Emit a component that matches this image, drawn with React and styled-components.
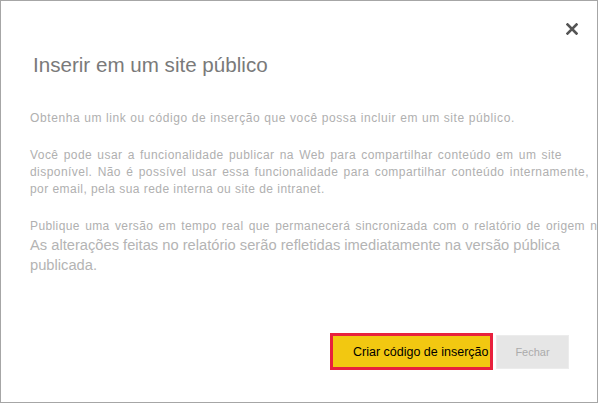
import React from "react";
import styled, { createGlobalStyle } from "styled-components";

const Global = createGlobalStyle`
  html, body { margin: 0; padding: 0; background: #fff; }
  body { font-family: "Liberation Sans", Arial, sans-serif; }
`;

const Dialog = styled.div`
  box-sizing: border-box;
  width: 598px;
  height: 403px;
  border: 1px solid #a6a6a6;
  background: #fff;
  overflow: hidden;
  display: flex;
  flex-direction: column;
`;

const Header = styled.div`
  display: flex;
  justify-content: flex-end;
  padding: 21px 18px 0 0;
  height: 14px;
`;

const CloseButton = styled.button`
  border: 0;
  background: none;
  padding: 0;
  width: 14px;
  height: 14px;
  display: flex;
  align-items: center;
  justify-content: center;
  cursor: pointer;
`;

const Title = styled.h1`
  margin: 17px 0 0 32px;
  font-size: 20.6px;
  font-weight: normal;
  color: #7a7a7a;
  line-height: 24px;
  white-space: nowrap;
`;

const Body = styled.div`
  padding: 0 0 0 29px;
  display: flex;
  flex-direction: column;
`;

const Para = styled.p`
  margin: ${(p) => p.$top}px 0 0 0;
  font-size: 12px;
  letter-spacing: ${(p) => p.$ls}px;
  word-spacing: ${(p) => p.$ws || 0}px;
  color: #b0b0b0;
  line-height: 17px;
  white-space: nowrap;
`;

const Line = styled.span`
  display: block;
  width: ${(p) => (p.$w ? p.$w + "px" : "auto")};
  text-align: ${(p) => (p.$w ? "justify" : "left")};
  text-align-last: ${(p) => (p.$w ? "justify" : "auto")};
  white-space: ${(p) => (p.$w ? "normal" : "nowrap")};
`;

const BigLine = styled.span`
  display: block;
  font-size: 14.7px;
  letter-spacing: 0;
  word-spacing: 0;
  line-height: 20px;
  color: #b4b4b4;
`;

const Footer = styled.div`
  margin-top: auto;
  display: flex;
  justify-content: flex-end;
  align-items: center;
  gap: 3px;
  padding: 0 28px 32px 0;
`;

const PrimaryButton = styled.button`
  box-sizing: border-box;
  width: 163px;
  height: 37px;
  border: 3px solid #e8213d;
  background: #f2c811;
  color: #000;
  font-family: "Liberation Sans", Arial, sans-serif;
  font-size: 12.5px;
  padding: 0 0 0 20px;
  text-align: left;
  white-space: nowrap;
  cursor: pointer;
`;

const SecondaryButton = styled.button`
  box-sizing: border-box;
  width: 73px;
  height: 34px;
  border: 1px solid #ececec;
  background: #e6e6e6;
  color: #ababab;
  font-family: "Liberation Sans", Arial, sans-serif;
  font-size: 11px;
  cursor: pointer;
`;

export default function App() {
  return (
    <>
      <Global />
      <Dialog>
        <Header>
          <CloseButton aria-label="Fechar">
            <svg width="12" height="12" viewBox="0 0 12 12">
              <path d="M1.5 1.5 L10.5 10.5 M10.5 1.5 L1.5 10.5" stroke="#555" strokeWidth="2.6" strokeLinecap="square" />
            </svg>
          </CloseButton>
        </Header>
        <Title>Inserir em um site público</Title>
        <Body>
          <Para $top={33} $ls={0.6}>
            Obtenha um link ou código de inserção que você possa incluir em um site público.
          </Para>
          <Para $top={20} $ls={0.45}>
            <Line $w={532}>Você pode usar a funcionalidade publicar na Web para compartilhar conteúdo em um site</Line>
            <Line $w={559}>disponível. Não é possível usar essa funcionalidade para compartilhar conteúdo internamente,</Line>
            <Line>por email, pela sua rede interna ou site de intranet.</Line>
          </Para>
          <Para $top={20} $ls={0.4} $ws={1.5}>
            <Line>Publique uma versão em tempo real que permanecerá sincronizada com o relatório de origem no Power BI.</Line>
            <BigLine>As alterações feitas no relatório serão refletidas imediatamente na versão pública</BigLine>
            <BigLine>publicada.</BigLine>
          </Para>
        </Body>
        <Footer>
          <PrimaryButton>Criar código de inserção</PrimaryButton>
          <SecondaryButton>Fechar</SecondaryButton>
        </Footer>
      </Dialog>
    </>
  );
}
